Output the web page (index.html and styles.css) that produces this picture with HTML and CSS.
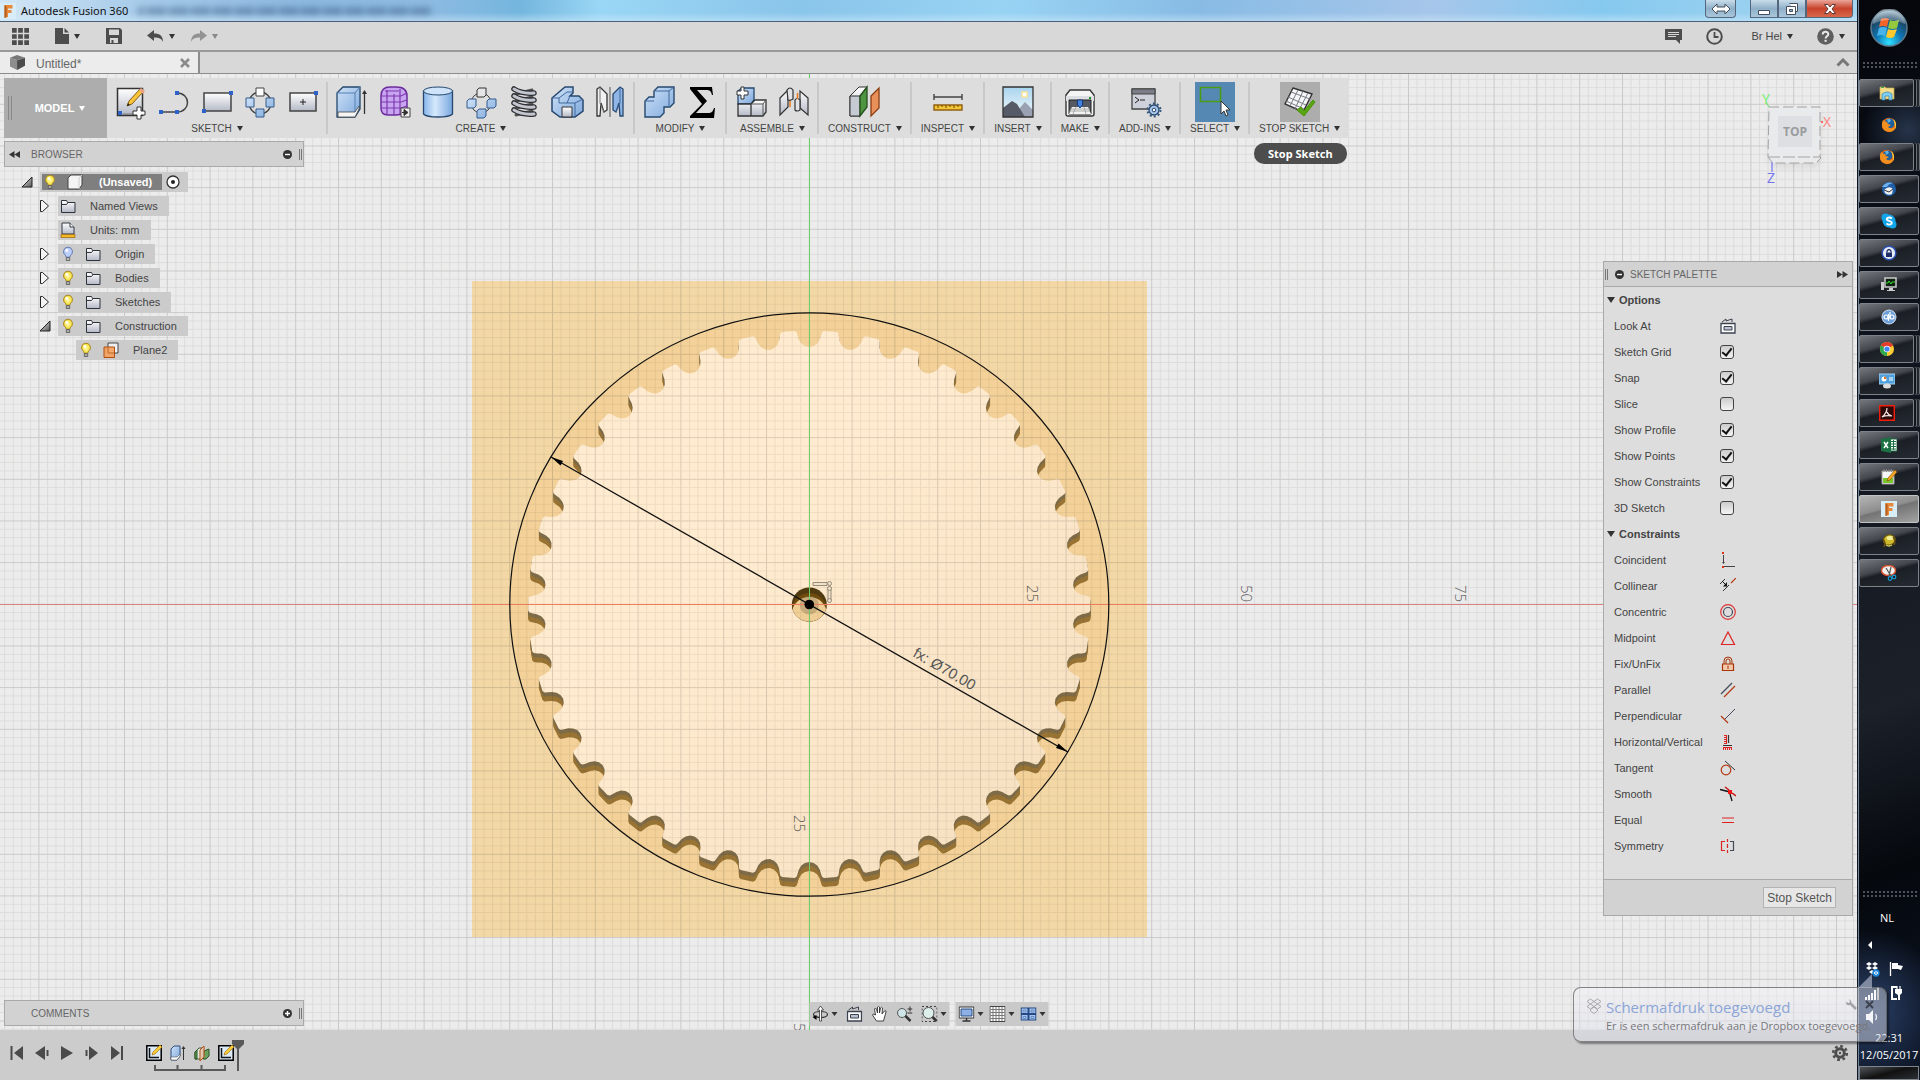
FILE: index.html
```html
<!DOCTYPE html>
<html lang="en">
<head>
    <meta charset="UTF-8">
    <meta name="viewport" content="width=device-width, initial-scale=1.0">
    <title>Autodesk Fusion 360</title>
    <link rel="stylesheet" href="styles.css">
</head>
<body>
    <svg class="defs" aria-hidden="true">
        <defs>
            <linearGradient id="blue" x1="0" y1="0" x2="1" y2="1"><stop offset="0" stop-color="#cfe2f8"/><stop offset="1" stop-color="#7fa9dc"/></linearGradient>
            <linearGradient id="grey" x1="0" y1="0" x2="0" y2="1"><stop offset="0" stop-color="#fff"/><stop offset="1" stop-color="#b4b9c6"/></linearGradient>
            <linearGradient id="tube" x1="0" y1="0" x2="1" y2="0"><stop offset="0" stop-color="#86b5ea"/><stop offset=".4" stop-color="#d6e9fc"/><stop offset="1" stop-color="#79a7df"/></linearGradient>
            <linearGradient id="sky" x1="0" y1="0" x2="0" y2="1"><stop offset="0" stop-color="#a9d4ee"/><stop offset="1" stop-color="#f3fafc"/></linearGradient>
            <radialGradient id="glow"><stop offset="0" stop-color="#fffbb0"/><stop offset="1" stop-color="#f6dc2c"/></radialGradient>
            <radialGradient id="orb" cx=".5" cy=".9" r=".9"><stop offset="0" stop-color="#2fe0ff"/><stop offset=".4" stop-color="#0f76b4"/><stop offset=".75" stop-color="#1c4664"/><stop offset="1" stop-color="#a9c4d4"/></radialGradient>
            <linearGradient id="steel" x1="0" y1="0" x2="1" y2="1"><stop offset="0" stop-color="#eee"/><stop offset="1" stop-color="#555"/></linearGradient>
        </defs>
        <symbol id="bulb" viewBox="0 0 16 16"><path d="M8 1.2a4.4 4.4 0 0 0-2.6 8l.9 2h3.4l.9-2A4.4 4.4 0 0 0 8 1.2z" fill="url(#glow)" stroke="#a8862a"/><path d="M6.3 11.5h3.4v3H6.3z" fill="#aaa" stroke="#555" stroke-width=".8"/><circle cx="6.8" cy="4.5" r="1.4" fill="#fff"/></symbol>
        <symbol id="bulb-off" viewBox="0 0 16 16"><path d="M8 1.2a4.4 4.4 0 0 0-2.6 8l.9 2h3.4l.9-2A4.4 4.4 0 0 0 8 1.2z" fill="#bcd0fb" stroke="#6379ad"/><path d="M6.3 11.5h3.4v3H6.3z" fill="#bbb" stroke="#555" stroke-width=".8"/><circle cx="6.8" cy="4.5" r="1.4" fill="#fff"/></symbol>
        <symbol id="folder" viewBox="0 0 16 16"><path d="M1.500 14.500v-12h5l1 2h7.500v10z" fill="url(#grey)" stroke="#2f333c"/><path d="M1.500 6.500h5l1.500-2" fill="none" stroke="#2f333c"/></symbol>
        <symbol id="open" viewBox="0 0 12 12"><path d="M11 1v10H1z" fill="url(#steel)" stroke="#222"/></symbol>
        <symbol id="closed" viewBox="0 0 12 14"><path d="M1.500 1.500v11h2l6-5.500-6-5.500z" fill="#f4f4f4" stroke="#222"/></symbol>
        <symbol id="feature-sketch" viewBox="0 0 16 16"><path d="M.8.8h14.400v14.400H.8z" fill="#dcebfa" stroke="#000" stroke-width="1.500"/><path d="M3.500 3v9.500H13" fill="none" stroke="#111" stroke-width="1.500"/><path d="M6 10l1-3 7-7 2 2-7 7z" fill="#f7cf3a" stroke="#a86b10" stroke-width=".7"/></symbol>
        <symbol id="lookat" viewBox="0 0 16 16"><path d="M1 5.500h14v9.500H1z" fill="#fff" stroke="#3b424f" stroke-width="1.300"/><path d="M4 8.500h8v3.500H4z" fill="#b8c3cf" stroke="#3b424f"/><path d="M2 4l4-3v2l6-2v3" fill="none" stroke="#3b424f"/></symbol>
        <symbol id="fusion" viewBox="0 0 16 16"><path d="M0 0h16v16H0z" fill="#d7edf8"/><path d="M4.500 2h8v3.500H8V7h3.500v3H8v4l-3.500 1z" fill="#e8893a"/><path d="M4.500 2l2 1.500V14l-2 1z" fill="#b35c1b"/></symbol>
        <symbol id="firefox" viewBox="0 0 16 16"><circle cx="8" cy="8" r="7.200" fill="#e66a17"/><circle cx="8.500" cy="6.500" r="5" fill="#1d5f9f"/><path d="M2 3c-2 5-1 9 3 11 5 2 9 0 10-5-2 3-6 3-8 1l3-2-3-1-1-2-2-.5z" fill="#f1901e"/><path d="M12 2c3 2 4 6 2 10 0-3 0-6-2-10z" fill="#fbd23b"/><path d="M6 2h3l1 2-3 2z" fill="#5db4de"/></symbol>
    </svg>

    <main class="app">
        <header class="titlebar">
            <svg class="app-logo" viewBox="0 0 16 16"><use href="#fusion"/></svg>
            <h1>Autodesk Fusion 360</h1>
            <div class="behind" aria-hidden="true"></div>
            <div class="window-buttons">
                <button class="win resize" aria-label="Resize"><svg width="20" height="12" viewBox="0 0 20 12"><path d="M1 6l5-5v3h8V1l5 5-5 5V8H6v3z" fill="#fff" stroke="#454e5d"/></svg></button>
                <div class="win-set">
                    <button class="win" aria-label="Minimize"><svg width="14" height="12" viewBox="0 0 14 12"><path d="M1.500 7.500h11v4h-11z" fill="#fff" stroke="#454e5d"/></svg></button>
                    <button class="win" aria-label="Restore"><svg width="14" height="14" viewBox="0 0 14 14"><path d="M4.500 1.500h8v8h-2M1.500 4.500h9v8h-9z" fill="#fff" stroke="#454e5d"/><path d="M4.500 7.500h3v2h-3z" fill="#8fb5d3" stroke="#454e5d"/></svg></button>
                    <button class="win close" aria-label="Close"><svg width="14" height="12" viewBox="0 0 14 12"><path d="M1.500 1.500h3.500l2 2.500 2-2.500h3.500L9 6l3.500 4.500H9L7 8l-2 2.500H1.500L5 6z" fill="#fff" stroke="#5d3a3a"/></svg></button>
                </div>
            </div>
        </header>

        <div class="appbar">
            <button aria-label="Data panel"><svg width="17" height="17" viewBox="0 0 18 18"><path d="M0 0h5v5H0zM6.500 0h5v5h-5zM13 0h5v5h-5zM0 6.500h5v5H0zM6.500 6.500h5v5h-5zM13 6.500h5v5h-5zM0 13h5v5H0zM6.500 13h5v5h-5zM13 13h5v5h-5z" fill="#4d4d4d"/></svg></button>
            <button class="file" aria-label="File"><svg width="14" height="16" viewBox="0 0 14 16"><path d="M0 0h8v6h6v10H0z" fill="#4d4d4d"/><path d="M9.500 0L14 4.500H9.500z" fill="#4d4d4d"/></svg><span class="caret"></span></button>
            <button class="save" aria-label="Save"><svg width="16" height="16" viewBox="0 0 16 16"><path d="M0 0h14l2 2v14H0z" fill="#4d4d4d"/><path d="M3 1.500h10V7H3zM4 10h8v5H4z" fill="#d8d8d8"/><path d="M5.500 12h2v3h-2z" fill="#4d4d4d"/></svg></button>
            <button class="undo" aria-label="Undo"><svg width="17" height="12" viewBox="0 0 17 12"><path d="M0 5.500L7 0v3.500c6 0 9 2.500 9 8.500-1.500-3.500-4-4.500-9-4.500V11z" fill="#4d4d4d"/></svg><span class="caret"></span></button>
            <button class="redo" aria-label="Redo"><svg width="17" height="12" viewBox="0 0 17 12"><path d="M17 5.500L10 0v3.500c-6 0-9 2.500-9 8.500 1.500-3.500 4-4.500 9-4.500V11z" fill="#929292"/></svg><span class="caret"></span></button>
            <div class="account">
                <button aria-label="Comments"><svg width="17" height="15" viewBox="0 0 17 15"><path d="M0 0h17v11h-2v4l-4-4H0z" fill="#4d4d4d"/><path d="M3 3.500h11M3 5.500h11M3 7.500h8" stroke="#d8d8d8"/></svg></button>
                <button class="jobs" aria-label="Job status"><svg width="17" height="17" viewBox="0 0 17 17"><circle cx="8.500" cy="8.500" r="7.300" fill="none" stroke="#4d4d4d" stroke-width="2"/><path d="M8.500 4v5h4" fill="none" stroke="#4d4d4d" stroke-width="1.800"/></svg></button>
                <button>Br Hel<span class="caret"></span></button>
                <button aria-label="Help"><svg width="17" height="17" viewBox="0 0 17 17"><circle cx="8.500" cy="8.500" r="8.300" fill="#5f5f5f"/><path d="M5.700 6.500c0-3.500 5.600-3.500 5.600-.3 0 2-2.700 2.200-2.700 4.300" fill="none" stroke="#e6e6e6" stroke-width="2"/><path d="M7.500 11.800h2.200v2H7.500z" fill="#e6e6e6"/></svg><span class="caret"></span></button>
            </div>
        </div>

        <div class="tabs">
            <div class="tab">
                <svg width="15" height="16" viewBox="0 0 17 18"><path d="M0 3l8 3v11L0 13z" fill="#8d8d8d"/><path d="M17 3L8 6v11l9-5z" fill="#4c4c4c"/><path d="M0 3l8-3 9 3-9 3z" fill="#777"/></svg>
                <span>Untitled*</span>
                <button aria-label="Close tab"><svg width="10" height="10" viewBox="0 0 10 10"><path d="M1 1l8 8M9 1L1 9" stroke="#8a8a8a" stroke-width="2.500"/></svg></button>
            </div>
            <button class="collapse" aria-label="Collapse"><svg width="14" height="9" viewBox="0 0 14 9"><path d="M1.500 7.500L7 2l5.500 5.500" fill="none" stroke="#777" stroke-width="3"/></svg></button>
        </div>

        <section class="workspace">
            <svg class="canvas" viewBox="0 0 1857 956" preserveAspectRatio="xMidYMid slice">
                <defs>
                    <pattern id="minor" width="8.560" height="8.333" patternUnits="userSpaceOnUse" x="808.800" y="529.800"><path d="M.5 0v9M0 .5h9" stroke="#503c28" stroke-opacity=".09"/></pattern>
                    <pattern id="major" width="42.800" height="41.667" patternUnits="userSpaceOnUse" x="808.800" y="529.800"><path d="M.5 0v42M0 .5h43" stroke="#333" stroke-opacity=".11"/></pattern>
                    <linearGradient id="face" x1="0" y1="0" x2="1" y2="1"><stop offset=".4" stop-color="#ffebcf"/><stop offset="1" stop-color="#f5dfc0"/></linearGradient>
                    <path id="gear" transform="translate(809.300 530.500)"/>
                    <clipPath id="hole"><ellipse cx="809.300" cy="530.500" rx="17.500" ry="17"/></clipPath>
                </defs>
                <rect width="1857" height="956" fill="#ececec"/>
                <rect x="472" y="207" width="675" height="656" fill="#f3d8a6"/>
                <ellipse cx="809.300" cy="530.500" rx="299.500" ry="291.700" fill="#f3d198"/>
                <g id="gear-wall-low" fill="#997434"></g>
                <g id="gear-wall-high" fill="#7f6c48"></g>
                <use href="#gear" fill="url(#face)"/>
                <g clip-path="url(#hole)">
                    <rect x="790" y="510" width="40" height="40" fill="#4f3a10"/>
                    <ellipse cx="809.300" cy="536" rx="17.500" ry="17" fill="#6f4b0b"/>
                    <ellipse cx="809.300" cy="540" rx="17.500" ry="17" fill="#f0cf97"/>
                </g>
                <circle cx="809.300" cy="531" r="9.500" fill="#8a7550" fill-opacity=".4"/>
                <rect width="1857" height="956" fill="url(#minor)"/>
                <rect width="1857" height="956" fill="url(#major)"/>
                <path d="M0 530.500h1857" stroke="#d98080"/>
                <path d="M472 530.500h675" stroke="#ee7d5e"/>
                <path d="M809.500 0v956" stroke="#69cf69"/>
                <ellipse cx="809.300" cy="530.500" rx="299.500" ry="291.700" fill="none" stroke="#111" stroke-width="1.200"/>
                <path d="M551 383l517 295" stroke="#111" stroke-width="1.300"/>
                <path d="M551 383l12 4-2.500 4.500zM1068 678l-12-4 2.500-4.500z"/>
                <circle cx="809.300" cy="530.500" r="4.800"/>
                <g fill="#f0e2c8" stroke="#8d8170" stroke-width=".9"><path d="M813 508.500h14v3h-14zM828 513v14h3v-14z"/><circle cx="829.500" cy="509.500" r="2"/><circle cx="829.500" cy="514.500" r="2"/><circle cx="829.500" cy="526.500" r="2"/></g>
                <g class="ruler">
                    <text transform="translate(1027 511) rotate(90)">25</text>
                    <text transform="translate(1241 511) rotate(90)">50</text>
                    <text transform="translate(1455 511) rotate(90)">75</text>
                    <text transform="translate(794 741) rotate(90)">25</text>
                    <text transform="translate(794 949) rotate(90)">50</text>
                </g>
                <text class="dimension" transform="translate(912 582) rotate(30)">fx: Ø70.00</text>
            </svg>

            <div class="toolbar">
                <button class="mode">MODEL<span class="caret"></span></button>
                <div class="group">
                    <div class="tools">
                        <button aria-label="Create sketch"><svg viewBox="0 0 32 32"><path d="M2.500 2.500h25v27h-25z" fill="url(#grey)" stroke="#333" stroke-width="1.500"/><path d="M12 20l2-5L25 3l3 3-11 12z" fill="#f8c53a" stroke="#875a1a"/><path d="M24 4l2-2 4 3-2 3z" fill="#e9a383"/><path d="M12 20l1-3 2 2z" fill="#222"/><path d="M3 25h4v4H3z" fill="#2f62c8"/><path d="M8 28h10" stroke="#777"/><path d="M22 21h4v4h4v4h-4v4h-4v-4h-4v-4h4z" fill="#fff" stroke="#333"/></svg></button>
                        <button aria-label="Line"><svg viewBox="0 0 32 32"><path d="M3 26h16c14 0 14-19 0-19" fill="none" stroke="#444" stroke-width="1.500"/><path d="M1 24h4v4H1zM17 24h4v4h-4zM17 5h4v4h-4z" fill="#2f62c8"/></svg></button>
                        <button aria-label="Rectangle"><svg viewBox="0 0 32 32"><path d="M3 7h27v18H3z" fill="url(#grey)" stroke="#444" stroke-width="1.500"/><path d="M1 23h4v4H1zM28 5h4v4h-4z" fill="#2f62c8"/></svg></button>
                        <button aria-label="Circular pattern"><svg viewBox="0 0 32 32"><circle cx="16" cy="17" r="11" fill="none" stroke="#444" stroke-width="1.300"/><path d="M12 2h8v8h-8z" fill="#fff" stroke="#444"/><path d="M2 12h8v9H2zM22 12h8v9h-8zM12 23h8v8h-8z" fill="url(#blue)" stroke="#335a8c"/></svg></button>
                        <button aria-label="Center rectangle"><svg viewBox="0 0 32 32"><path d="M3 7h26v18H3z" fill="url(#grey)" stroke="#444" stroke-width="1.500"/><path d="M16 13v6M13 16h6" stroke="#222"/><path d="M27 5h4v4h-4z" fill="#2f62c8"/></svg></button>
                    </div>
                    <button class="menu">SKETCH<span class="caret"></span></button>
                </div>
                <div class="group">
                    <div class="tools">
                        <button aria-label="Extrude"><svg viewBox="0 0 32 32"><path d="M1 7l6-6h17v22l-5 8H1z" fill="url(#blue)" stroke="#26486f" stroke-width="1.300"/><path d="M1 7h18v24M19 7l5-6" fill="none" stroke="#5580b4"/><path d="M2 26h17l4-6v3l-4 8H2z" fill="#f5f5f5" stroke="#444" stroke-width=".8"/><path d="M28.500 28V5" stroke="#333" stroke-width="1.300"/><path d="M26 8l2.500-4L31 8z" fill="#333"/></svg></button>
                        <button aria-label="Create form"><svg viewBox="0 0 32 32"><path d="M2 10q0-9 9-9h6q11 0 11 9v12q-2 7-11 7h-8q-7 0-7-7z" fill="#c9a5f1" stroke="#6a2b9c" stroke-width="1.500"/><path d="M8 4v24M15 8v21M21 3v25M2 10h20l6-3M2 16h20l6-2M2 22h20l6-2M6 5h14" fill="none" stroke="#7c39b0" stroke-width="1.200"/><path d="M22 22h9v9h-9z" fill="#eee" stroke="#444"/><path d="M23 26.500h4m-2-3v6l4-3z" fill="#333" stroke="#333"/></svg></button>
                        <button aria-label="Cylinder"><svg viewBox="0 0 32 32"><path d="M1.500 5v23c4 4 25 4 29 0V5z" fill="url(#tube)" stroke="#26486f" stroke-width="1.300"/><ellipse cx="16" cy="5" rx="14.500" ry="4" fill="#cfe3f9" stroke="#26486f"/></svg></button>
                        <button aria-label="Pattern"><svg viewBox="0 0 32 32"><circle cx="16" cy="17" r="10" fill="none" stroke="#444"/><path d="M12 4l2-2h7v7l-2 2h-7z" fill="#e5e5e8" stroke="#333"/><path d="M2 15l2-2h7v7l-2 2H2zM22 15l2-2h7v7l-2 2h-7zM12 25l2-2h7v7l-2 2h-7z" fill="url(#blue)" stroke="#335a8c"/></svg></button>
                        <button aria-label="Coil"><svg viewBox="0 0 32 32"><g fill="none" stroke-linecap="round"><path d="M8 8l16-4M8 15l16-4M8 22l16-4M8 29l16-4" stroke="#555" stroke-width="3"/><path d="M6 3q8 5 20 4M6 10q8 5 20 4M6 17q8 5 20 4M6 24q8 5 20 4" stroke="#2c2e33" stroke-width="5.500"/><path d="M6 3q8 5 20 4M6 10q8 5 20 4M6 17q8 5 20 4M6 24q8 5 20 4" stroke="#c3c6ce" stroke-width="3"/></g></svg></button>
                        <button aria-label="Combine"><svg viewBox="0 0 32 32"><path d="M1 12L14 1h8v6l-3 3h9l4 4v11l-8 6H9l-8-6z" fill="url(#blue)" stroke="#26486f" stroke-width="1.500"/><path d="M1 12h7l8-6h6M8 12v5h16l8-4M24 17v13M16 17l3-7" fill="none" stroke="#41689b"/><path d="M11 21h10v10H11z" fill="url(#grey)" stroke="#333"/></svg></button>
                        <button aria-label="Mirror"><svg viewBox="0 0 32 32"><path d="M3 30V3l3-2 7 7v16l-3 2-3-9-1 13z" fill="#f1f1f4" stroke="#333" stroke-width="1.300"/><path d="M6 1v16l4 9" fill="none" stroke="#777"/><path d="M16 1v30" stroke="#555"/><path d="M29 30V3l-3-2-7 7v16l3 2 3-9 1 13z" fill="#8fb6e6" stroke="#26486f" stroke-width="1.300"/><path d="M26 1v16l-4 9" fill="none" stroke="#41689b"/></svg></button>
                    </div>
                    <button class="menu">CREATE<span class="caret"></span></button>
                </div>
                <div class="group">
                    <div class="tools">
                        <button aria-label="Press pull"><svg viewBox="0 0 32 32"><path d="M2 15l4-4h5V5l4-4h16v16l-4 4h-6v6l-4 4H2z" fill="url(#blue)" stroke="#26486f" stroke-width="1.400"/><path d="M2 15h9M11 5h15v16M26 5l5-4" fill="none" stroke="#41689b"/></svg></button>
                        <button aria-label="Parameters"><svg viewBox="0 0 32 32"><path d="M4 1h22l1 8h-1c-1-4-2-5-6-5H11l10 11L10 27h12c4 0 5-2 6-5h1l-1 10H4v-2l12-12L4 3z"/></svg></button>
                    </div>
                    <button class="menu">MODIFY<span class="caret"></span></button>
                </div>
                <div class="group">
                    <div class="tools">
                        <button aria-label="New component"><svg viewBox="0 0 32 32"><path d="M3 5l4-3h12v12l-3 4H3z" fill="url(#blue)" stroke="#26486f" stroke-width="1.300"/><path d="M3 18h13v12H3zM16 18l4-4h11v12l-3 4H16z" fill="url(#grey)" stroke="#333" stroke-width="1.300"/><path d="M28 30V18l3-4M28 18H16" fill="none" stroke="#555"/><path d="M6 1h3v4h4v4H9v4H6V9H2V5h4z" fill="#fff" stroke="#333"/></svg></button>
                        <button aria-label="Joint"><svg viewBox="0 0 32 32"><path d="M2 12l8-8v17l-8 8zM30 12l-8-7v17l8 7z" fill="url(#grey)" stroke="#333" stroke-width="1.200"/><path d="M9 4q3-4 6 0v9q-3 2-5 1zM17 14q2-3 5 0v10q-3 2-5 0z" fill="#e2e3e7" stroke="#333" stroke-width="1.200"/><path d="M12 15v6M19.500 7v6" stroke="#e57a21" stroke-width="1.500"/></svg></button>
                    </div>
                    <button class="menu">ASSEMBLE<span class="caret"></span></button>
                </div>
                <div class="group">
                    <div class="tools">
                        <button aria-label="Offset plane"><svg viewBox="0 0 32 32"><path d="M1 10l9-9h8l-7 9v20H1z" fill="url(#grey)" stroke="#333"/><path d="M1 10h10v20H1z" fill="#c6cad3" stroke="#333"/><path d="M11 10l7-9v20l-7 9z" fill="#4f9440" stroke="#254f1d" stroke-width="1.300"/><path d="M22 10l8-8v20l-8 8z" fill="#e79059" stroke="#8b3d13" stroke-width="1.300"/></svg></button>
                    </div>
                    <button class="menu">CONSTRUCT<span class="caret"></span></button>
                </div>
                <div class="group">
                    <div class="tools">
                        <button aria-label="Measure"><svg viewBox="0 0 32 32"><path d="M2 8v6M30 8v6M2 11h28" stroke="#444" stroke-width="1.400"/><path d="M2 19h28v5H2z" fill="#f2c736" stroke="#946011" stroke-width="1.400"/><path d="M6 19v3M10 19v2M14 19v3M18 19v2M22 19v3M26 19v2" stroke="#7a4d0a"/></svg></button>
                    </div>
                    <button class="menu">INSPECT<span class="caret"></span></button>
                </div>
                <div class="group">
                    <div class="tools">
                        <button aria-label="Insert image"><svg viewBox="0 0 32 32"><path d="M1 1h30v30H1z" fill="url(#sky)"/><path d="M16 24l7-8 8 8v7H16z" fill="#9aa1b2"/><path d="M1 22l9-7 5 3 8 13H1z" fill="#565a66"/><path d="M20 6h5v5h-5z" fill="#fff" stroke="#fbe39a" stroke-width="1.500"/><path d="M1 1h30v30H1z" fill="none" stroke="#333" stroke-width="1.300"/></svg></button>
                    </div>
                    <button class="menu">INSERT<span class="caret"></span></button>
                </div>
                <div class="group">
                    <div class="tools">
                        <button aria-label="3D print"><svg viewBox="0 0 32 32"><path d="M2 9l4-5h20l4 5v19q0 2-2 2H4q-2 0-2-2z" fill="#f4f4f4" stroke="#333" stroke-width="1.400"/><path d="M2 10h28v5H2z" fill="#dedfe3"/><path d="M5 14h22v14H5z" fill="#555961" stroke="#222"/><path d="M8 21h16l3 7H5z" fill="#f2f2f2"/><path d="M5 25h21M6 23h20M12 21l-3 7M20 21l2 7" stroke="#999" stroke-width=".8"/><path d="M13.500 14h5v5L16 22l-2.500-3z" fill="#4683df" stroke="#123c81"/><path d="M25 11h2v2h-2z" fill="#1d9426"/></svg></button>
                    </div>
                    <button class="menu">MAKE<span class="caret"></span></button>
                </div>
                <div class="group">
                    <div class="tools">
                        <button aria-label="Scripts"><svg viewBox="0 0 32 32"><path d="M3 3h23v20H3z" fill="#cfd1da" stroke="#444" stroke-width="1.300"/><path d="M3 3h23v5H3z" fill="#7b7e88" stroke="#444"/><path d="M6 11l4 3-4 3M11 14h5" fill="none" stroke="#222"/><circle cx="25" cy="24" r="5" fill="#a9c6ea" stroke="#26486f" stroke-width="1.300"/><circle cx="25" cy="24" r="6.500" fill="none" stroke="#34587f" stroke-width="2" stroke-dasharray="2 2.100"/><circle cx="25" cy="24" r="1.800" fill="#fff" stroke="#26486f"/></svg></button>
                    </div>
                    <button class="menu">ADD-INS<span class="caret"></span></button>
                </div>
                <div class="group">
                    <div class="tools">
                        <button class="selected" aria-label="Select"><svg viewBox="0 0 32 32"><path d="M1.500 1.500h20v14h-20z" fill="none" stroke="#4a9c13" stroke-width="1.600"/><path d="M22 15v13l3-3 2 5 2-1-2-5h4z" fill="#fff" stroke="#333"/></svg></button>
                    </div>
                    <button class="menu">SELECT<span class="caret"></span></button>
                </div>
                <div class="group">
                    <div class="tools">
                        <button class="hovered" aria-label="Stop sketch"><svg viewBox="0 0 32 32"><path d="M9 2l19 6-9 18L1 18z" fill="#f6f6f8" stroke="#333" stroke-width="1.400"/><path d="M14 4L6 20M19 5l-8 18M24 7l-9 17M7 6l19 7M4 11l18 8M2 15l18 8" fill="none" stroke="#777a84"/><path d="M13 24l4-3 3 4 9-11 2 2-11 14z" fill="#58a611" stroke="#4a9208"/></svg></button>
                    </div>
                    <button class="menu">STOP SKETCH<span class="caret"></span></button>
                </div>
            </div>
            <div class="tooltip" role="tooltip">Stop Sketch</div>

            <aside class="browser">
                <div class="panel-head">
                    <svg width="11" height="7" viewBox="0 0 11 7"><path d="M5.500 0v7L0 3.500zM11 0v7L5.500 3.500z" fill="#333"/></svg>
                    <h2>BROWSER</h2>
                    <button aria-label="Collapse browser"><svg width="9" height="9" viewBox="0 0 9 9"><circle cx="4.500" cy="4.500" r="4.500" fill="#333"/><path d="M2 4.500h5" stroke="#fff" stroke-width="1.400"/></svg></button>
                    <span class="grip"></span>
                </div>
                <ul class="tree">
                    <li><svg class="twist" viewBox="0 0 12 12"><use href="#open"/></svg><button class="node root"><span class="name"><svg><use href="#bulb"/></svg><svg viewBox="0 0 16 16"><path d="M1 4l3-3h11v10l-3 4H1z" fill="#f4f4f5" stroke="#444"/><path d="M12 15V4l3-3" fill="none" stroke="#ccc"/></svg><b>(Unsaved)</b></span><svg class="radio" viewBox="0 0 14 14"><circle cx="7" cy="7" r="6" fill="#fff" stroke="#333" stroke-width="1.300"/><circle cx="7" cy="7" r="2" fill="#222"/></svg></button></li>
                    <li class="sub"><svg class="twist" viewBox="0 0 12 14"><use href="#closed"/></svg><button class="node"><svg><use href="#folder"/></svg><span>Named Views</span></button></li>
                    <li class="sub"><span class="twist"></span><button class="node"><svg viewBox="0 0 16 16"><path d="M2 12V1h8l4 4v7z" fill="url(#grey)" stroke="#333a44"/><path d="M10 1v4h4" fill="#fff" stroke="#333a44"/><path d="M1 12.500h14v3H1z" fill="#f4b92b" stroke="#a06c0c" stroke-width=".8"/></svg><span>Units: mm</span></button></li>
                    <li class="sub"><svg class="twist" viewBox="0 0 12 14"><use href="#closed"/></svg><button class="node"><svg><use href="#bulb-off"/></svg><svg><use href="#folder"/></svg><span>Origin</span></button></li>
                    <li class="sub"><svg class="twist" viewBox="0 0 12 14"><use href="#closed"/></svg><button class="node"><svg><use href="#bulb"/></svg><svg><use href="#folder"/></svg><span>Bodies</span></button></li>
                    <li class="sub"><svg class="twist" viewBox="0 0 12 14"><use href="#closed"/></svg><button class="node"><svg><use href="#bulb"/></svg><svg><use href="#folder"/></svg><span>Sketches</span></button></li>
                    <li class="sub"><svg class="twist" viewBox="0 0 12 12"><use href="#open"/></svg><button class="node"><svg><use href="#bulb"/></svg><svg><use href="#folder"/></svg><span>Construction</span></button></li>
                    <li class="leaf"><button class="node"><svg><use href="#bulb"/></svg><svg viewBox="0 0 16 16"><path d="M5 1h10v10H5z" fill="#eef0f4" stroke="#444"/><path d="M1 5h10.500v10.500H1z" fill="#f5a05c" fill-opacity=".9" stroke="#b04d0c"/><path d="M5 5v6h6" fill="none" stroke="#c3702f"/></svg><span>Plane2</span></button></li>
                </ul>
            </aside>

            <div class="viewcube">
                <svg width="80" height="100" viewBox="0 0 80 100">
                    <path d="M20 24h50v48l-4 6H24l-6-6z" fill="#000" fill-opacity=".08" class="soft"/>
                    <path d="M18 18h51v50l1 1-5 5H22l-5-6z" fill="#e9eaeb" stroke="#a3a3a3" stroke-dasharray="10 4"/>
                    <path d="M27 27h34v31H27z" fill="#dddfe2"/>
                    <path d="M17 68h53" stroke="#a3a3a3" stroke-dasharray="12 3"/>
                    <path d="M18 18l-3-5" stroke="#5fdf5f"/><path d="M21 73v10" stroke="#8a8af0" stroke-width="1.500"/>
                    <path d="M70 33h2" stroke="#f66" stroke-width="2"/>
                    <text x="44" y="47" class="cube-face">TOP</text>
                    <text x="15" y="15" class="axis" fill="#70f070">Y</text>
                    <text x="76" y="38" class="axis" fill="#ff8080">X</text>
                    <text x="20" y="94" class="axis" fill="#7474f0">Z</text>
                </svg>
            </div>

            <aside class="palette">
                <div class="panel-head">
                    <span class="grip"></span>
                    <button aria-label="Collapse palette"><svg width="9" height="9" viewBox="0 0 9 9"><circle cx="4.500" cy="4.500" r="4.500" fill="#333"/><path d="M2 4.500h5" stroke="#fff" stroke-width="1.400"/></svg></button>
                    <h2>SKETCH PALETTE</h2>
                    <svg width="11" height="7" viewBox="0 0 11 7"><path d="M0 0v7l5.500-3.500zM5.500 0v7L11 3.500z" fill="#333"/></svg>
                </div>
                <div class="palette-body">
                    <h3>Options</h3>
                    <button class="row"><span>Look At</span><svg><use href="#lookat"/></svg></button>
                    <div class="row"><label for="grid">Sketch Grid</label><input type="checkbox" id="grid" checked></div>
                    <div class="row"><label for="snap">Snap</label><input type="checkbox" id="snap" checked></div>
                    <div class="row"><label for="slice">Slice</label><input type="checkbox" id="slice"></div>
                    <div class="row"><label for="profile">Show Profile</label><input type="checkbox" id="profile" checked></div>
                    <div class="row"><label for="points">Show Points</label><input type="checkbox" id="points" checked></div>
                    <div class="row"><label for="constraints">Show Constraints</label><input type="checkbox" id="constraints" checked></div>
                    <div class="row"><label for="sketch3d">3D Sketch</label><input type="checkbox" id="sketch3d"></div>
                    <h3>Constraints</h3>
                    <button class="row"><span>Coincident</span><svg viewBox="0 0 16 16"><path d="M3.500 3v8M4 14.500h11" stroke="#444"/><path d="M2 10h3l-1.500 2z" fill="#444"/><path d="M2 0h2v2H2zM2 14h2v2H2z" fill="#e2330f"/></svg></button>
                    <button class="row"><span>Collinear</span><svg viewBox="0 0 16 16"><path d="M0 6l5-5M3 13l6-6" stroke="#333"/><path d="M11 5l5-5" stroke="#b53a12" stroke-width="1.200"/><path d="M2 3l4 4" stroke="#111"/><path d="M7 4v4.500H3z" fill="#111"/></svg></button>
                    <button class="row"><span>Concentric</span><svg viewBox="0 0 16 16"><circle cx="8" cy="8" r="7.300" fill="none" stroke="#d33" stroke-width="1.200"/><circle cx="8" cy="8" r="4.500" fill="none" stroke="#444b58" stroke-width="1.200"/></svg></button>
                    <button class="row"><span>Midpoint</span><svg viewBox="0 0 16 16"><path d="M8 2L1.500 14.500h13z" fill="none" stroke="#d22" stroke-width="1.200"/></svg></button>
                    <button class="row"><span>Fix/UnFix</span><svg viewBox="0 0 16 16"><path d="M4 8V5q0-4 4-4t4 4v3M6 8V5q0-2 2-2t2 2v3" fill="none" stroke="#a63505"/><path d="M2.500 8h11v6.500h-11z" fill="#f4c9ac" stroke="#a63505" stroke-width="1.200"/><path d="M8 9.500v3.500" stroke="#a63505"/></svg></button>
                    <button class="row"><span>Parallel</span><svg viewBox="0 0 16 16"><path d="M1 12L12 1" stroke="#444b58" stroke-width="1.200"/><path d="M4 15L15 4" stroke="#b53a12" stroke-width="1.200"/></svg></button>
                    <button class="row"><span>Perpendicular</span><svg viewBox="0 0 16 16"><path d="M5 11L15 1" stroke="#444b58"/><path d="M1 8l7 7" stroke="#b53a12" stroke-width="1.200"/></svg></button>
                    <button class="row"><span>Horizontal/Vertical</span><svg viewBox="0 0 16 16"><path d="M8.500 1v8M3 11.500h9" stroke="#333" stroke-width="1.200"/><path d="M6.500 1v9" stroke="#d22"/><path d="M5 1v9" stroke="#d22" stroke-width="2" stroke-dasharray="1 1"/><path d="M3 13.500h9" stroke="#d22"/><path d="M3 15h9" stroke="#d22" stroke-width="2" stroke-dasharray="1 1"/></svg></button>
                    <button class="row"><span>Tangent</span><svg viewBox="0 0 16 16"><circle cx="6" cy="10" r="4.800" fill="none" stroke="#b53a12" stroke-width="1.200"/><path d="M5 1l10 9" stroke="#333"/></svg></button>
                    <button class="row"><span>Smooth</span><svg viewBox="0 0 16 16"><path d="M0 3.500l8 2M10 8l2 7" stroke="#111" stroke-width="1.300"/><path d="M5 1l4 3M12 7l4 3" stroke="#c11" stroke-width="1.500"/><path d="M8 4h4v4H8z" fill="#f01414"/></svg></button>
                    <button class="row"><span>Equal</span><svg viewBox="0 0 16 16"><path d="M2 6h12M2 10.500h12" stroke="#d22" stroke-width="1.200"/></svg></button>
                    <button class="row"><span>Symmetry</span><svg viewBox="0 0 16 16"><path d="M5 3.500H1.500v9H5" fill="none" stroke="#d22" stroke-width="1.200"/><path d="M7.500 1v3m0 2v4m0 2v3" stroke="#d22" stroke-width="1.200"/><path d="M10 3.500h3.500v9H10" fill="none" stroke="#444b58" stroke-width="1.200"/></svg></button>
                </div>
                <div class="palette-foot"><button>Stop Sketch</button></div>
            </aside>

            <div class="comments panel-head">
                <h2>COMMENTS</h2>
                <button aria-label="Expand comments"><svg width="9" height="9" viewBox="0 0 9 9"><circle cx="4.500" cy="4.500" r="4.500" fill="#333"/><path d="M2 4.500h5M4.500 2v5" stroke="#fff" stroke-width="1.400"/></svg></button>
                <span class="grip"></span>
            </div>

            <nav class="viewbar">
                <div>
                    <button class="drop" aria-label="Orbit"><svg viewBox="0 0 16 16"><ellipse cx="8" cy="8.500" rx="7" ry="3" fill="none" stroke="#333" stroke-width="1.200"/><path d="M7 15V4H5l3-4 3 4H9v11z" fill="#fff" stroke="#333" stroke-width=".8"/><path d="M0 11l4-2v5z"/></svg><span class="caret"></span></button>
                    <button aria-label="Look at"><svg><use href="#lookat"/></svg></button>
                    <button aria-label="Pan"><svg viewBox="0 0 16 16"><path d="M5 15L1 9q0-2 3 0L3 3q1-2 2 0l1 4V1q1-1.500 2 0v6l1-5q1-1.500 2 0l-.5 6L13 5q2-1 1.500 1L12 15z" fill="#fff" stroke="#333" stroke-width=".9"/></svg></button>
                    <button aria-label="Zoom"><svg viewBox="0 0 16 16"><circle cx="5.500" cy="7" r="4.500" fill="#cfe4e6" stroke="#555"/><path d="M9 10l5 5" stroke="#333" stroke-width="2.500"/><path d="M11 3h5M13.500.5v5M11 7h5" stroke="#333"/></svg></button>
                    <button class="drop" aria-label="Fit"><svg viewBox="0 0 16 16"><path d="M.5.5h15v15H.5z" fill="none" stroke="#444" stroke-dasharray="2 2"/><circle cx="7" cy="7" r="5.500" fill="#dcefea" stroke="#555"/><path d="M11 11l4 4" stroke="#333" stroke-width="2.500"/></svg><span class="caret"></span></button>
                </div>
                <div>
                    <button class="drop" aria-label="Display settings"><svg viewBox="0 0 16 16"><path d="M.7 1h14.600v11H.7z" fill="#fff" stroke="#333"/><path d="M2.500 3h11v7h-11z" fill="#8fb0e4" stroke="#234a86"/><path d="M4 15h8M8 12v3" stroke="#333" stroke-width="1.500"/></svg><span class="caret"></span></button>
                    <button class="drop" aria-label="Grid settings"><svg viewBox="0 0 16 16"><path d="M.5.5h15v15H.5z" fill="#fff" stroke="#444"/><path d="M3.500 1v14M6.500 1v14M9.500 1v14M12.500 1v14M1 3.500h14M1 6.500h14M1 9.500h14M1 12.500h14" stroke="#777"/></svg><span class="caret"></span></button>
                    <button class="drop" aria-label="Viewports"><svg viewBox="0 0 16 16"><path d="M.6 2h7v5.500h-7zM8.400 2h7v5.500h-7zM.6 8.500h7V14h-7zM8.400 8.500h7V14h-7z" fill="#a9c6ee" stroke="#234a86" stroke-width="1.200"/><path d="M2.500 4h3v2h-3zM10.500 4h3v2h-3zM2.500 10.500h3v2h-3zM10.500 10.500h3v2h-3z" fill="none" stroke="#5a80ba" stroke-width=".8"/></svg><span class="caret"></span></button>
                </div>
            </nav>
        </section>

        <footer class="timeline">
            <div class="playback">
                <button aria-label="First"><svg viewBox="0 0 14 14"><path d="M1.500 0v14" stroke="#4a4a4a" stroke-width="2"/><path d="M13 0v14L4 7z" fill="#4a4a4a"/></svg></button>
                <button aria-label="Step back"><svg viewBox="0 0 14 14"><path d="M12.500 4v6" stroke="#4a4a4a" stroke-width="2"/><path d="M10 0v14L0 7z" fill="#4a4a4a"/></svg></button>
                <button aria-label="Play"><svg viewBox="0 0 14 14"><path d="M1 0v14l12-7z" fill="#4a4a4a"/></svg></button>
                <button aria-label="Step forward"><svg viewBox="0 0 14 14"><path d="M1.500 4v6" stroke="#4a4a4a" stroke-width="2"/><path d="M4 0v14l9-7z" fill="#4a4a4a"/></svg></button>
                <button aria-label="Last"><svg viewBox="0 0 14 14"><path d="M12 0v14" stroke="#4a4a4a" stroke-width="2"/><path d="M1 0v14l9-7z" fill="#4a4a4a"/></svg></button>
            </div>
            <div class="history">
                <div class="features">
                    <button aria-label="Sketch1"><svg><use href="#feature-sketch"/></svg></button>
                    <button aria-label="Extrude1"><svg viewBox="0 0 16 16"><path d="M1 4l3-3h6v10l-3 4H1z" fill="url(#blue)" stroke="#2c4e7e"/><path d="M1 12h6l3-3v2l-3 4H1z" fill="#fff" stroke="#555" stroke-width=".6"/><path d="M13.500 15V2" stroke="#333"/><path d="M11.500 4l2-3 2 3z" fill="#333"/></svg></button>
                    <button aria-label="Plane2"><svg viewBox="0 0 16 16"><path d="M1 7l4-4h3v11H1z" fill="#dfe9dc" stroke="#3c5a35"/><path d="M1 7l2-2v9H1zM10 6l5-2v7l-3 3h-3z" fill="#6ba35e" stroke="#2b5322"/><path d="M6 5l4-4v11l-4 4z" fill="#f3d3bd" fill-opacity=".8" stroke="#b14a12"/></svg></button>
                    <button aria-label="Sketch2"><svg><use href="#feature-sketch"/></svg></button>
                </div>
                <svg class="track" viewBox="0 0 100 34"><path d="M11 26v5h70v-5M33.500 31v-5M57.500 31v-5" fill="none" stroke="#5a5a5a" stroke-width="2"/><path d="M88 1h12v4l-5 5h-2l-5-5z" fill="#5a5a5a"/><path d="M94 8v24" stroke="#5a5a5a" stroke-width="2"/></svg>
            </div>
            <button class="settings" aria-label="Settings"><svg viewBox="0 0 16 16"><circle cx="8" cy="8" r="6.800" fill="none" stroke="#4d4d4d" stroke-width="2.500" stroke-dasharray="2.700 2.640"/><circle cx="8" cy="8" r="4.300" fill="none" stroke="#4d4d4d" stroke-width="3"/><circle cx="8" cy="8" r="1.200" fill="#4d4d4d"/></svg></button>
        </footer>
    </main>

    <aside class="taskbar">
        <button class="start" aria-label="Start"><svg viewBox="0 0 38 38"><circle cx="19" cy="19" r="18" fill="url(#orb)" stroke="#5e7d90" stroke-width="1.500"/><path d="M11 10q4-2 8 0l-2 8q-4-2-8 0z" fill="#f0642a"/><path d="M20 11q4 2 9 0l-2 8q-4 2-9 0z" fill="#94c83d"/><path d="M9 19q4-2 8 0l-2 8q-4-2-8 0z" fill="#46b3ea"/><path d="M18 20q4 2 9 0l-3 8q-4 2-8 0z" fill="#fdc92e"/><path d="M3 15a16 16 0 0 1 32 0q-16-8-32 0z" fill="#fff" fill-opacity=".3"/></svg></button>
        <div class="dots"></div>
        <div class="tasks">
            <button class="task stacked" aria-label="Explorer"><svg viewBox="0 0 16 16"><path d="M1 2h5l1 1h8v11H1z" fill="#f2dc88" stroke="#c7a94e" stroke-width=".7"/><path d="M3 15V9q5-4 10 0v6h-3v-4H6v4z" fill="#7fcdf2" stroke="#2e86b8" stroke-width=".7"/><path d="M2 2.500h3" stroke="#4a4"/></svg></button>
            <button class="task plain" aria-label="Firefox"><svg><use href="#firefox"/></svg></button>
            <button class="task stacked" aria-label="Firefox window"><svg><use href="#firefox"/></svg></button>
            <button class="task" aria-label="Thunderbird"><svg viewBox="0 0 16 16"><circle cx="8" cy="8" r="7" fill="#1f5fa8"/><path d="M1 6q4-6 11-4-5 1-6 4z" fill="#6db2ea"/><path d="M3 9q5-5 9-1l-1 5q-4 2-7-1z" fill="#f1f1f1"/><path d="M3 9l5 2 4-3" fill="none" stroke="#333"/></svg></button>
            <button class="task" aria-label="Skype"><svg viewBox="0 0 16 16"><circle cx="8" cy="8" r="6.500" fill="#12a5e8"/><circle cx="4.500" cy="4.500" r="4" fill="#12a5e8"/><circle cx="11.500" cy="11.500" r="4" fill="#12a5e8"/><path d="M11 5.500q-3-2-5 0-1 1.500 2 2.300 4 1 2.500 3-2.500 1.700-5-.3" fill="none" stroke="#fff" stroke-width="1.800"/></svg></button>
            <button class="task" aria-label="KeePass"><svg viewBox="0 0 16 16"><circle cx="8" cy="8" r="6.800" fill="#e9edf5" stroke="#2d52b5" stroke-width="1.500"/><path d="M5 7.500h6V12H5z" fill="#1b2c66"/><path d="M6 7.500V6q2-3 4 0v1.500" fill="none" stroke="#1b2c66" stroke-width="1.300"/></svg></button>
            <button class="task" aria-label="Monitor"><svg viewBox="0 0 16 16"><path d="M0 5h3v8H0z" fill="#ccc"/><path d="M4 1h11v9H4z" fill="#122012" stroke="#ccc" stroke-width="1.500"/><path d="M5 6h2l1-2 2 3 1-2h3" fill="none" stroke="#2ddc2d"/><path d="M8 11h4v2h2v1H6v-1h2z" fill="#ccc"/></svg></button>
            <button class="task" aria-label="qBittorrent"><svg viewBox="0 0 16 16"><circle cx="8" cy="8" r="7" fill="#6d9fd8" stroke="#d4e2f3"/><circle cx="5" cy="8" r="2" fill="none" stroke="#fff" stroke-width="1.200"/><path d="M7.500 5v7M9 3v7" stroke="#fff" stroke-width="1.200"/><circle cx="11" cy="8" r="2" fill="none" stroke="#fff" stroke-width="1.200"/></svg></button>
            <button class="task stacked" aria-label="Chrome"><svg viewBox="0 0 16 16"><circle cx="8" cy="8" r="7" fill="#fc3"/><path d="M8 8L1.900 4.500a7 7 0 0 1 12.200 0z" fill="#e33b2e"/><path d="M8 8L1.900 4.500A7 7 0 0 0 8 15z" fill="#2da94f"/><circle cx="8" cy="8" r="3.300" fill="#fff"/><circle cx="8" cy="8" r="2.600" fill="#4285f4"/></svg></button>
            <button class="task stacked" aria-label="Presentation"><svg viewBox="0 0 16 16"><path d="M0 1h16v10H0z" fill="#4e9fdc" stroke="#a5d4f3"/><circle cx="5" cy="6" r="2.500" fill="#fff"/><path d="M5 6V3.500A2.500 2.500 0 0 1 7.500 6z" fill="#e5721f"/><path d="M10 5h4M10 7h4" stroke="#fff"/><ellipse cx="8" cy="13" rx="4" ry="2.500" fill="#ddd"/></svg></button>
            <button class="task stacked" aria-label="Acrobat"><svg viewBox="0 0 16 16"><path d="M.7.7h14.600v14.600H.7z" fill="#2b0a0a" stroke="#f21c0d" stroke-width="1.400"/><path d="M3 12q5-4 5-9M8 7q1 3 5 4-6-1-10 1" fill="none" stroke="#f3dede" stroke-width="1.200"/></svg></button>
            <button class="task" aria-label="Excel"><svg viewBox="0 0 16 16"><path d="M8 2h8v12H8z" fill="#fff" stroke="#1d7044"/><path d="M10 4.500h5M10 7h5M10 9.500h5M10 12h5M12.500 3v10" stroke="#1d7044"/><path d="M0 2l10-2v16L0 14z" fill="#1d7044"/><path d="M3 5l4 6M7 5l-4 6" stroke="#fff" stroke-width="1.500"/></svg></button>
            <button class="task" aria-label="Notepad"><svg viewBox="0 0 16 16"><path d="M1 2h12v13H1z" fill="#f6f6f6" stroke="#999"/><path d="M2 9h10v5H2z" fill="#7ac42c"/><path d="M3 0v3M5.500 0v3M8 0v3M10.500 0v3" stroke="#888"/><path d="M6 12l1-3 7-8 2 2-7 8z" fill="#f4a522" stroke="#7c4a0a" stroke-width=".6"/></svg></button>
            <button class="task active" aria-label="Fusion 360"><svg><use href="#fusion"/></svg></button>
            <button class="task" aria-label="Bee"><svg viewBox="0 0 16 16"><ellipse cx="8.500" cy="7" rx="6" ry="5" fill="#cdb92c" stroke="#6b590f" transform="rotate(-15 8 8)"/><ellipse cx="9" cy="5" rx="3.500" ry="2" fill="#f3ee9a"/><path d="M2 6q3 4 1 8M12 4q3 3 1 8" fill="none" stroke="#6a4f12" stroke-width="1.500"/><path d="M5 12q3 2 6 0" fill="none" stroke="#d8d15a" stroke-width="1.500"/></svg></button>
            <button class="task" aria-label="Snipping tool"><svg viewBox="0 0 16 16"><ellipse cx="7.500" cy="5.500" rx="7" ry="5" fill="#f4f1ee" stroke="#d4512f" stroke-width="1.500"/><path d="M5 3l5 8M10 2L8 11" stroke="#555" stroke-width="1.200"/><circle cx="9" cy="13.500" r="1.800" fill="none" stroke="#169ad6" stroke-width="1.200"/><circle cx="13" cy="12" r="1.800" fill="none" stroke="#169ad6" stroke-width="1.200"/></svg></button>
        </div>
        <div class="dots low"></div>
        <div class="lang">NL</div>
        <div class="tray">
            <button aria-label="Show hidden icons"><svg viewBox="0 0 16 16"><path d="M8 4v8L4 8z" fill="#fff"/></svg></button><span></span>
            <button aria-label="Dropbox"><svg viewBox="0 0 16 16"><path d="M5 1l3 2-3 2-3-2zM11 1l3 2-3 2-3-2zM5 5l3 2-3 2-3-2zM11 5l3 2-3 2-3-2zM8 9l3 2-3 2-3-2z" fill="#fff"/><circle cx="12" cy="12" r="3.700" fill="#1f86dc"/><path d="M10 12q2-3 4 0-2 3-4 0" fill="none" stroke="#fff"/></svg></button>
            <button aria-label="Action center"><svg viewBox="0 0 16 16"><path d="M2.500 1v14" stroke="#fff" stroke-width="1.300"/><path d="M4 2h6v2l5 1-2 4-3-1H4z" fill="#fff"/></svg></button>
            <button aria-label="Network"><svg viewBox="0 0 16 16"><path d="M1 12h2v3H1zM4 10h2v5H4zM7 8h2v7H7zM10 5h2v10h-2z" fill="#fff"/><path d="M13 2h2v13h-2z" fill="#aaa"/></svg></button>
            <button aria-label="Power"><svg viewBox="0 0 16 16"><path d="M9 2H4v12h5" fill="none" stroke="#fff" stroke-width="2"/><path d="M9 1v3M12 1v3" stroke="#fff" stroke-width="1.200"/><path d="M7 4h7v4l-2 2v5h-2v-5L7 8z" fill="#fff"/></svg></button>
            <button aria-label="Volume"><svg viewBox="0 0 16 16"><path d="M2 5h3l4-4v14l-4-4H2z" fill="#fff"/><path d="M11.500 5q2 3 0 6" fill="none" stroke="#fff" stroke-width="1.300"/></svg></button>
        </div>
        <div class="clock"><span>22:31</span><span>12/05/2017</span></div>
        <button class="show-desktop" aria-label="Show desktop"></button>
    </aside>

    <div class="toast" role="status">
        <svg class="box-icon" viewBox="0 0 16 16"><path d="M4.500 1L8 3.500 4.500 6 1 3.500zM11.500 1L15 3.500 11.500 6 8 3.500zM4.500 6L8 8.500 4.500 11 1 8.500zM11.500 6L15 8.500 11.500 11 8 8.500zM4.500 11.500L8 9l3.500 2.500V13L8 15.500 4.500 13z" fill="none" stroke="#a9a9ad"/></svg>
        <div>
            <strong>Schermafdruk toegevoegd</strong>
            <p>Er is een schermafdruk aan je Dropbox toegevoegd.</p>
        </div>
        <div class="toast-actions">
            <button aria-label="Options"><svg width="11" height="11" viewBox="0 0 11 11"><path d="M4 4l6 6" stroke="#a3a3a6" stroke-width="2.500"/><path d="M3 0l1 3-1 1-3-1q0 4 4 3 3-4-1-6z" fill="#a3a3a6"/></svg></button>
            <button aria-label="Dismiss"><svg width="9" height="9" viewBox="0 0 9 9"><path d="M1 1l7 7M8 1L1 8" stroke="#3d4250" stroke-width="2"/></svg></button>
        </div>
        <svg class="tail" viewBox="0 0 14 14"><path d="M0 14L14 0v14z" fill="#dfe3f4" fill-opacity=".5"/></svg>
    </div>

    <script src="gear.js"></script>
</body>
</html>
```

FILE: gear.js
```javascript
const TEETH = 42;
const OUTER = 32.85;
const ROOT = 30.9;
const SCALE_X = 8.56;
const SCALE_Y = 8.333;
const DEPTH = 9;

// half a tooth space, as [degrees from its middle, radius]
const half = [[0, ROOT], [0.95, ROOT + 0.12], [1.7, ROOT + 0.45], [2.2, ROOT + 0.95], [2.4, ROOT + 1.4], [2.6, OUTER - 0.15], [3, OUTER]];
const profile = half.slice(1).reverse().map(([a, r]) => [-a, r]).concat(half);

const points = [];
for (let i = 0; i < TEETH; i++) {
    const middle = 90 + i * 360 / TEETH;
    for (const [a, r] of profile) {
        const t = (middle + a) * Math.PI / 180;
        points.push((Math.cos(t) * r * SCALE_X).toFixed(1) + ' ' + (Math.sin(t) * r * SCALE_Y).toFixed(1));
    }
}
document.getElementById('gear').setAttribute('d', 'M' + points.join('L') + 'Z');

// side walls: copies of the outline stacked below the face
function wall(id, from, to) {
    const group = document.getElementById(id);
    for (let dy = from; dy >= to; dy--) {
        const use = document.createElementNS('http://www.w3.org/2000/svg', 'use');
        use.setAttribute('href', '#gear');
        use.setAttribute('y', dy);
        group.appendChild(use);
    }
}
wall('gear-wall-low', DEPTH, 5);
wall('gear-wall-high', 4, 1);
```

FILE: styles.css
```css
* {
    box-sizing: border-box;
}

body, html {
    margin: 0;
    padding: 0;
    height: 100%;
    overflow: hidden;
}

body {
    display: flex;
    position: relative;
    font-family: "Liberation Sans", Arial, sans-serif;
    font-size: 11px;
    color: #444;
}

button {
    display: flex;
    align-items: center;
    margin: 0;
    padding: 0;
    border: none;
    background: none;
    font: inherit;
    color: inherit;
}

h1, h2, h3, p, ul {
    margin: 0;
    padding: 0;
    font-weight: normal;
}

svg {
    display: block;
    flex-shrink: 0;
}

.defs {
    position: absolute;
    width: 0;
    height: 0;
}

.caret {
    width: 0;
    height: 0;
    margin-left: 5px;
    border: 3px solid transparent;
    border-top: 5px solid #333;
    border-bottom: none;
}

.app {
    flex: 1;
    min-width: 0;
    display: flex;
    flex-direction: column;
}

/* title bar */
.titlebar {
    display: flex;
    align-items: center;
    height: 22px;
    border-bottom: 1px solid #4d5f75;
    background: linear-gradient(to bottom, transparent 60%, rgba(210, 235, 250, 0.5)), linear-gradient(to right, #d3e6f5 0, #a9cdea 130px, #8db8e0 300px, #8fbbe2 420px, #74b6de 520px, #9ad6f5 600px, #8ac5ea 800px, #98d3f4 1000px, #88bbe4 1200px, #a6c6ea 1430px, #86c9ef 1600px, #a5d5f0 100%);
}

.app-logo {
    width: 16px;
    height: 16px;
}

.titlebar h1 {
    margin-left: 5px;
    font-family: "Noto Sans", sans-serif;
    font-size: 11px;
    color: #111;
}

/* caption of the window underneath, seen through the glass */
.behind {
    width: 295px;
    height: 8px;
    margin-left: 10px;
    background: repeating-linear-gradient(to right, rgba(40, 75, 115, 0.45) 0 5px, rgba(40, 75, 115, 0.15) 5px 9px, rgba(40, 75, 115, 0.4) 9px 22px);
    filter: blur(3px);
}

.window-buttons {
    display: flex;
    align-self: flex-start;
    gap: 14px;
    margin-left: auto;
    margin-right: 4px;
}

.win-set {
    display: flex;
}

.win {
    justify-content: center;
    width: 28px;
    height: 18px;
    border: 1px solid #55677d;
    border-top: none;
    background: linear-gradient(#c9dcea, #8fb0c9 50%, #a9c7dc);
}

.win.resize {
    width: 31px;
    border-radius: 0 0 4px 4px;
}

.win.close {
    width: 47px;
    border-radius: 0 0 4px 0;
    background: linear-gradient(#e9a699, #c8422c 50%, #d7694b);
}

/* application bar */
.appbar {
    display: flex;
    align-items: center;
    height: 30px;
    padding: 0 12px;
    border-bottom: 2px solid #999;
    background: #d8d8d8;
}

.file {
    margin-left: 26px;
}

.save {
    margin-left: 26px;
}

.undo {
    margin-left: 25px;
}

.redo {
    margin-left: 15px;
}

.redo .caret {
    border-top-color: #888;
}

.account {
    display: flex;
    align-items: center;
    gap: 24px;
    margin-left: auto;
}

.account .jobs {
    margin-right: 4px;
}

/* document tabs */
.tabs {
    display: flex;
    height: 22px;
    border-bottom: 1px solid #8c8c8c;
    background: #d8d8d8;
}

.tab {
    display: flex;
    align-items: center;
    width: 200px;
    padding: 0 8px 0 10px;
    border-right: 2px solid #8c8c8c;
    background: #ececec;
}

.tab span {
    margin-left: 11px;
    padding-top: 3px;
    font-size: 12px;
    color: #666;
}

.tab button {
    margin-left: auto;
}

.collapse {
    margin-left: auto;
    margin-right: 7px;
}

/* workspace */
.workspace {
    position: relative;
    flex: 1;
    min-height: 0;
    overflow: hidden;
}

.canvas {
    position: absolute;
    inset: 0;
    width: 100%;
    height: 100%;
}

.ruler text {
    font-size: 15px;
    font-family: "Open Sans", sans-serif;
    font-weight: 300;
    fill: #555;
}

.dimension {
    font-size: 15px;
    font-family: "Liberation Sans", sans-serif;
    fill: #555;
}

.toolbar {
    position: absolute;
    top: 4px;
    left: 4px;
    display: flex;
    height: 60px;
    background: #dddddd;
}

.mode {
    justify-content: center;
    width: 103px;
    padding-left: 9px;
    background: linear-gradient(to right, transparent 4px, #888 4px 5px, transparent 5px 7px, #888 7px 8px, transparent 8px) center / 100% 24px no-repeat #adadad;
    font-weight: bold;
    color: #fff;
}

.mode .caret {
    border-top-color: #fff;
}

.group {
    display: flex;
    flex-direction: column;
    align-items: center;
    margin: 4px 0;
    padding: 0 3px 0 4px;
    border-right: 2px solid #c8c8c8;
}

.group:last-child {
    border-right: none;
}

.tools {
    display: flex;
    gap: 3px;
}

.tools button {
    justify-content: center;
    width: 40px;
    height: 40px;
}

.tools svg {
    width: 32px;
    height: 32px;
    overflow: visible;
}

.tools .selected {
    background: #5588b3;
}

.tools .hovered {
    background: #adadad;
}

.menu {
    height: 14px;
    padding: 0 5px;
    font-size: 10px;
    white-space: nowrap;
}

.tooltip {
    position: absolute;
    top: 69px;
    left: 1254px;
    height: 21px;
    padding: 0 14px;
    border-radius: 10px;
    background: #4d4d4d;
    font: bold 11px/21px "Noto Sans", sans-serif;
    color: #fff;
}

/* browser tree */
.panel-head {
    display: flex;
    align-items: center;
    height: 26px;
    padding: 0 8px;
    border: 1px solid #a9a9a9;
    background: #d2d2d2;
}

.panel-head h2 {
    font-size: 10px;
    color: #666;
}

.grip {
    width: 3px;
    height: 11px;
    border: solid #777;
    border-width: 0 1px;
}

.browser {
    position: absolute;
    top: 67px;
    left: 4px;
    width: 300px;
}

.browser .panel-head {
    padding: 0 1px 0 4px;
}

.browser h2 {
    margin-left: 11px;
}

.browser .panel-head button, .comments button {
    margin-left: auto;
    margin-right: 7px;
}

.tree {
    display: flex;
    flex-direction: column;
    gap: 4px;
    margin-top: 5px;
    padding-left: 17px;
    list-style: none;
}

.tree li {
    display: flex;
    align-items: center;
    gap: 7px;
}

.tree .sub {
    padding-left: 18px;
}

.tree .leaf {
    padding-left: 55px;
}

.twist {
    width: 12px;
    height: 14px;
}

.node {
    gap: 9px;
    height: 20px;
    padding: 0 11px 0 2px;
    background: #cbcbcb;
}

.node svg {
    width: 16px;
    height: 16px;
}

.node > span:last-child {
    margin-left: 5px;
}

.node.root {
    gap: 4px;
    padding: 0 8px 0 2px;
}

.root .name {
    display: flex;
    align-items: center;
    gap: 9px;
    height: 16px;
    padding-right: 10px;
    background: #7f7f7f;
    color: #fff;
}

.root b {
    margin-left: 7px;
}

.node .radio {
    width: 14px;
    height: 14px;
}

/* view cube */
.viewcube {
    position: absolute;
    top: 15px;
    right: 26px;
}

.viewcube .soft {
    filter: blur(3px);
}

.cube-face {
    font: bold 12px "Open Sans", sans-serif;
    fill: #999b9e;
    text-anchor: middle;
}

.axis {
    font: 14px "Open Sans", sans-serif;
    text-anchor: middle;
}

/* sketch palette */
.palette {
    position: absolute;
    top: 187px;
    right: 4px;
    width: 250px;
    border: 1px solid #a9a9a9;
    background: #dddddd;
}

.palette .panel-head {
    height: 25px;
    padding: 0 4px 0 1px;
    border-width: 0 0 1px;
}

.palette .panel-head button {
    margin: 0 6px 0 7px;
}

.palette .panel-head > svg {
    margin-left: auto;
}

.palette-body {
    padding-bottom: 20px;
}

.palette h3 {
    display: flex;
    align-items: center;
    height: 26px;
    padding-left: 3px;
    font-size: 11px;
    font-weight: bold;
}

.palette h3::before {
    content: "";
    margin-right: 4px;
    border: 4px solid transparent;
    border-top: 6px solid #333;
    border-bottom: none;
}

.row {
    display: grid;
    grid-template-columns: 106px 16px;
    align-items: center;
    justify-items: start;
    height: 26px;
    padding-left: 10px;
}

.row svg {
    width: 16px;
    height: 16px;
}

.row input {
    appearance: none;
    width: 14px;
    height: 14px;
    margin: 0;
    border: 1px solid #444;
    border-radius: 3px;
    background: linear-gradient(#ccc, #f4f4f4);
}

.row input:checked {
    display: grid;
    place-items: center;
}

.row input:checked::before {
    content: "";
    width: 4px;
    height: 8px;
    margin-bottom: 2px;
    border: solid #111;
    border-width: 0 2px 2px 0;
    transform: rotate(38deg);
}

.palette-foot {
    display: flex;
    justify-content: flex-end;
    align-items: center;
    height: 36px;
    padding-right: 16px;
    border-top: 1px solid #a9a9a9;
    background: #d2d2d2;
}

.palette-foot button {
    height: 21px;
    padding: 0 3px;
    border: 1px solid #b3b3b3;
    background: #e6e6e6;
    font-size: 12px;
    color: #555;
}

.comments {
    position: absolute;
    bottom: 4px;
    left: 4px;
    width: 300px;
    padding: 0 1px 0 26px;
}

.viewbar {
    position: absolute;
    bottom: 4px;
    left: 50%;
    transform: translateX(-50%);
    display: flex;
    gap: 6px;
}

.viewbar > div {
    display: flex;
    gap: 9px;
    height: 24px;
    padding: 0 3px;
    background: #c9c9c9;
}

.viewbar svg {
    width: 16px;
    height: 16px;
}

.viewbar .caret {
    margin-left: 3px;
    border-width: 4px 3px 0;
}

.viewbar > div:last-child {
    gap: 6px;
}

/* timeline */
.timeline {
    display: flex;
    height: 50px;
    padding-left: 10px;
    background: #cccccc;
}

.playback {
    display: flex;
    align-items: center;
    gap: 11px;
    height: 46px;
}

.playback svg {
    width: 14px;
    height: 14px;
}

.history {
    position: relative;
    margin-left: 22px;
    padding-top: 15px;
}

.features {
    display: flex;
    gap: 8px;
}

.features svg {
    width: 16px;
    height: 16px;
}

.track {
    position: absolute;
    top: 9px;
    left: -2px;
    width: 100px;
    height: 34px;
}

.settings {
    margin-left: auto;
    margin-right: 9px;
    height: 46px;
}

.settings svg {
    width: 16px;
    height: 16px;
}

/* taskbar */
.taskbar {
    display: flex;
    flex-direction: column;
    width: 63px;
    border-left: 1px solid #10161f;
    box-shadow: inset 1px 0 #75879a;
    background: radial-gradient(circle at 50px 130px, #26344a, transparent 45px), radial-gradient(circle at 10px 1010px, #2b4169, transparent 80px), linear-gradient(160deg, #04060b 0, #0d121c 30%, #1b2029 65%, #05080d 80%, #0c1424 100%);
    font-family: "Open Sans", sans-serif;
    color: #fff;
}

.start {
    justify-content: center;
    height: 56px;
}

.start svg {
    width: 38px;
    height: 38px;
}

.dots {
    height: 9px;
    margin: 5px 3px 9px 4px;
    background: radial-gradient(circle, #4d525b 0 1px, transparent 1px) 0 0 / 4px 4px;
}

.tasks {
    display: flex;
    flex-direction: column;
    gap: 4px;
    padding-left: 1px;
}

.task {
    justify-content: center;
    width: 60px;
    height: 28px;
    border: 1px solid #7d8188;
    border-radius: 2px;
    background: linear-gradient(165deg, #74777c 0, #43464c 38%, #1b1f25 48%, #262b33 100%);
}

.task svg {
    width: 16px;
    height: 16px;
}

.task.stacked {
    width: 55px;
    box-shadow: 2px 0 #12161c, 3px 0 #6b7077, 5px 0 #22272e, 6px 0 #6b7077;
}

.task.plain {
    border-color: transparent;
    background: none;
}

.task.active {
    border-color: #c4c4c4;
    background: linear-gradient(165deg, #b5b5b5 0, #8e8e8e 45%, #747474 50%, #a3a3a3 100%);
}

.dots.low {
    margin-top: auto;
    margin-bottom: 10px;
}

.lang {
    height: 24px;
    padding-right: 26px;
    line-height: 18px;
    text-align: right;
}

.tray {
    display: grid;
    grid-template-columns: 24px 24px;
    grid-auto-rows: 24px;
    padding-left: 2px;
}

.tray button {
    justify-content: center;
}

.tray svg {
    width: 16px;
    height: 16px;
}

.clock {
    display: flex;
    flex-direction: column;
    align-items: center;
    line-height: 17px;
    padding-bottom: 3px;
}

.show-desktop {
    height: 14px;
    margin: 0 1px;
    border: 1px solid #80858c;
    background: linear-gradient(165deg, #50545a, #111 50%, #2b2f35);
}

/* notification */
.toast {
    position: absolute;
    right: 33px;
    bottom: 38px;
    display: flex;
    align-items: flex-start;
    width: 314px;
    height: 55px;
    padding: 10px 8px 0 12px;
    border: 1px solid rgba(90, 90, 90, 0.7);
    border-radius: 8px;
    background: linear-gradient(rgba(245, 245, 250, 0.4), rgba(220, 222, 235, 0.5));
    box-shadow: 2px 2px 2px rgba(0, 0, 0, 0.4);
    font-family: "Open Sans", sans-serif;
    color: #77777a;
}

.box-icon {
    width: 16px;
    height: 16px;
}

.toast div:first-of-type {
    margin-left: 4px;
    white-space: nowrap;
}

.toast strong {
    display: block;
    font-size: 15px;
    line-height: 19px;
    font-weight: normal;
    color: #8ba5d6;
}

.toast p {
    font-size: 11px;
    line-height: 17px;
}

.toast-actions {
    position: absolute;
    top: 11px;
    right: 12px;
    display: flex;
    gap: 8px;
}

.tail {
    position: absolute;
    top: -14px;
    right: 14px;
    width: 14px;
    height: 14px;
}
```
